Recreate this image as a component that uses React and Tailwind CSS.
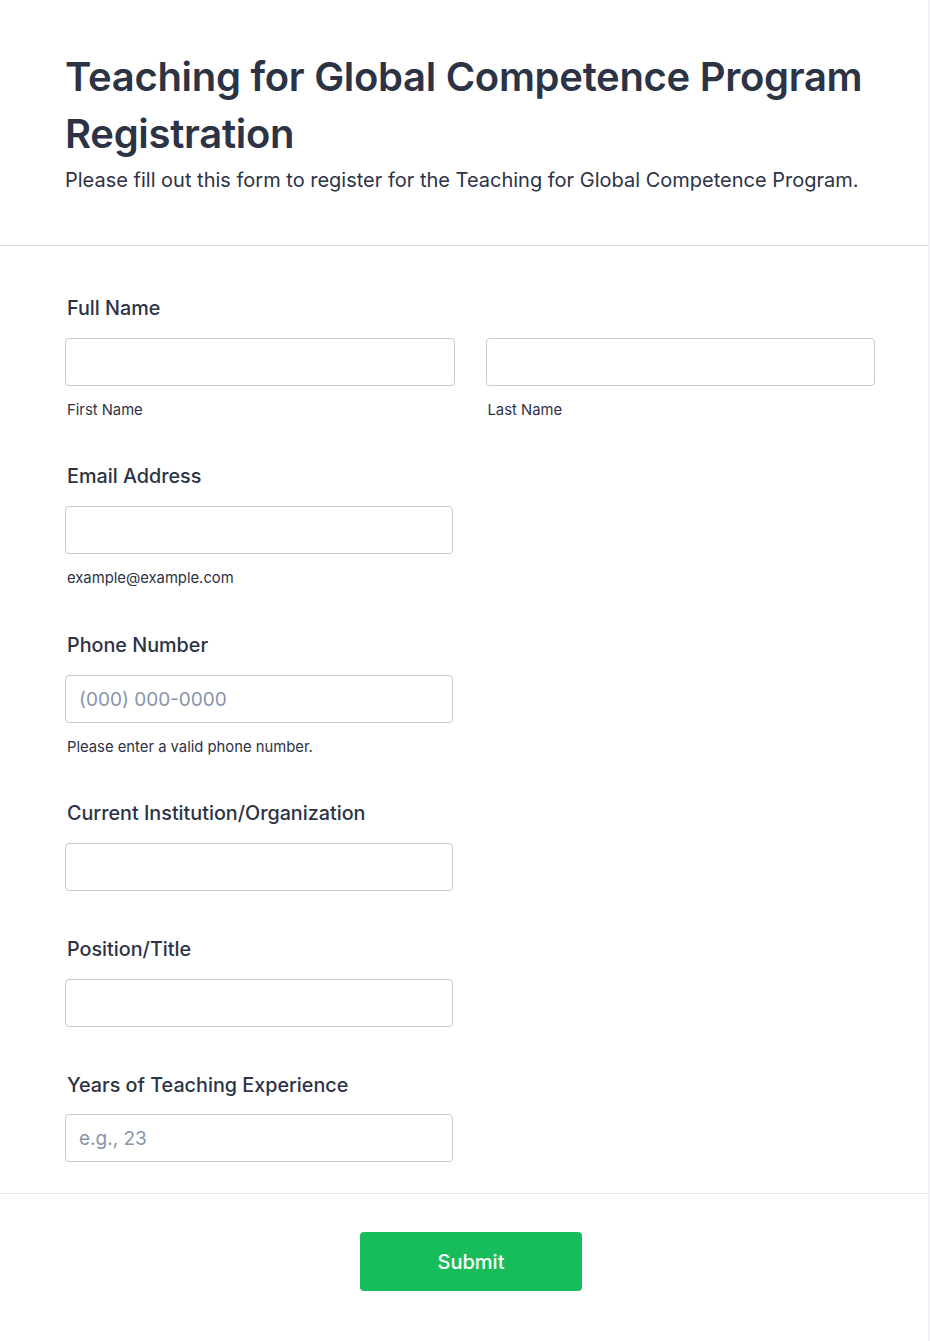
export default function App() {
  const inputCls =
    "block w-full h-12 rounded-[4px] border border-[#c3cad8] bg-white px-[13px] text-[19px] text-[#2c3345] placeholder:text-[#8894ab] outline-none";
  const labelCls = "block pl-[2px] text-[19.75px] leading-[28px] font-medium";
  const subCls = "mt-[14px] pl-[2px] text-[14.8px] leading-[20px]";

  return (
    <div className="min-h-[1341px] w-[930px] bg-[#f8f8fe] font-['Inter',sans-serif] text-[#2c3345]">
      <div className="w-[929px] bg-white border-r border-[#eceff8] min-h-[1341px]">
        {/* Header */}
        <div className="pl-[65px] pr-[40px] pt-[48px] pb-[51px] border-b border-[#dadbe6]">
          <h1 className="text-[40px] leading-[57px] font-semibold tracking-[-0.3px]">
            Teaching for Global Competence Program Registration
          </h1>
          <p className="mt-[5px] text-[20px] leading-[27px]">
            Please fill out this form to register for the Teaching for Global Competence Program.
          </p>
        </div>

        {/* Fields */}
        <div className="px-[65px] pt-[48px] pb-[31px] flex flex-col border-b border-[#e6e8f3]">
          <div>
            <label className={labelCls}>Full Name</label>
            <div className="mt-4 grid grid-cols-2 gap-[31px] w-[810px]">
              <div>
                <input className={inputCls} />
                <div className={subCls}>First Name</div>
              </div>
              <div>
                <input className={inputCls} />
                <div className={subCls}>Last Name</div>
              </div>
            </div>
          </div>

          <div className="mt-[42px]">
            <label className={labelCls}>Email Address</label>
            <div className="mt-4 w-[388px]">
              <input className={inputCls} />
              <div className={subCls}>example@example.com</div>
            </div>
          </div>

          <div className="mt-[43px]">
            <label className={labelCls}>Phone Number</label>
            <div className="mt-4 w-[388px]">
              <input className={inputCls} placeholder="(000) 000-0000" />
              <div className={subCls}>Please enter a valid phone number.</div>
            </div>
          </div>

          <div className="mt-[42px]">
            <label className={labelCls}>Current Institution/Organization</label>
            <div className="mt-4 w-[388px]">
              <input className={inputCls} />
            </div>
          </div>

          <div className="mt-[44px]">
            <label className={labelCls}>Position/Title</label>
            <div className="mt-4 w-[388px]">
              <input className={inputCls} />
            </div>
          </div>

          <div className="mt-[44px]">
            <label className={labelCls}>Years of Teaching Experience</label>
            <div className="mt-[15px] w-[388px]">
              <input className={inputCls} placeholder="e.g., 23" />
            </div>
          </div>
        </div>

        {/* Submit */}
        <div className="flex justify-center pl-[14px] pt-[38px] pb-[51px]">
          <button className="w-[222px] h-[59px] rounded-[4px] bg-[#18bd5b] text-white text-[20px] font-medium">
            Submit
          </button>
        </div>
      </div>
    </div>
  );
}
